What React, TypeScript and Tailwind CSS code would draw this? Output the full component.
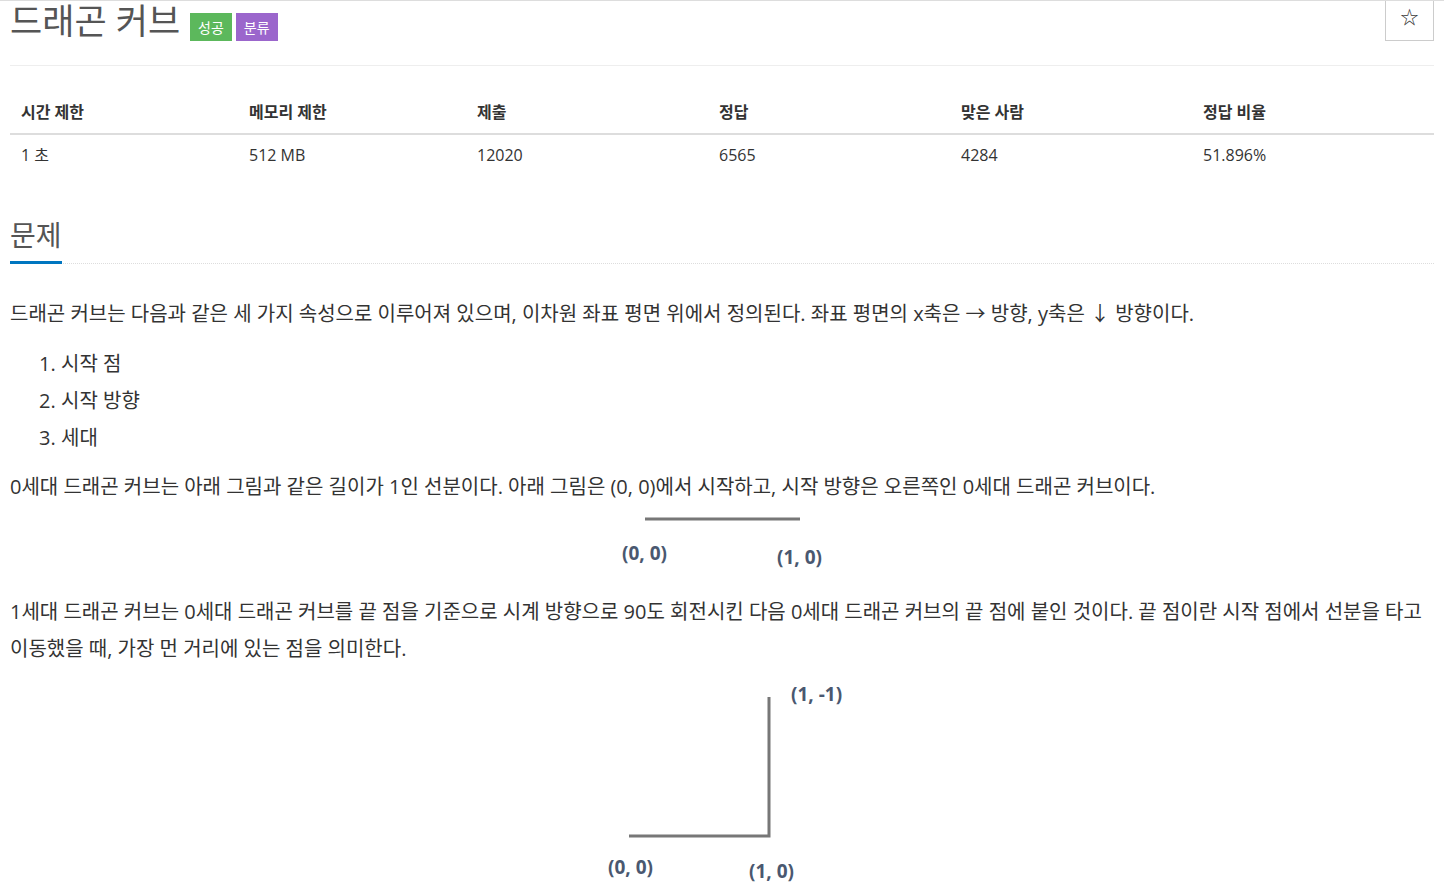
import React from 'react';

const font = { fontFamily: "'Open Sans', 'Noto Sans CJK KR', sans-serif" };

const stats = [
  { label: '시간 제한', value: '1 초', w: 'w-[228px]' },
  { label: '메모리 제한', value: '512 MB', w: 'w-[228px]' },
  { label: '제출', value: '12020', w: 'w-[242px]' },
  { label: '정답', value: '6565', w: 'w-[242px]' },
  { label: '맞은 사람', value: '4284', w: 'w-[242px]' },
  { label: '정답 비율', value: '51.896%', w: 'w-[242px]' },
];

const labelCls = 'fill-[#4a5870] text-[19px] font-bold';

const App: React.FC = () => {
  return (
    <div className="min-h-screen border-t border-[#ddd] bg-white px-[10px] text-[#333]" style={font}>
      <div className="flex items-start justify-between">
        <div className="flex items-start">
          <h1 className="text-[35px] font-normal leading-[40px] text-[#555]">드래곤 커브</h1>
          <span className="ml-[10px] mt-[12px] flex h-[28px] items-center bg-[#5cb85c] px-[8px] text-[14px] text-white">성공</span>
          <span className="ml-[4px] mt-[12px] flex h-[28px] items-center bg-[#9b66cc] px-[8px] text-[14px] text-white">분류</span>
        </div>
        <button className="flex h-[40px] w-[49px] justify-center border border-t-0 border-[#ccc] pt-[4px] text-[18px] leading-[24px] text-[#333]">☆</button>
      </div>
      <div className="mt-[24px] border-t border-[#eee]" />

      <table className="mt-[25px] w-full border-collapse text-[16px]">
        <thead>
          <tr className="border-b-2 border-[#ddd]">
            {stats.map((s) => (
              <th key={s.label} className={`${s.w} px-[11px] py-[11px] text-left font-bold leading-[20px] text-[#333]`}>{s.label}</th>
            ))}
          </tr>
        </thead>
        <tbody>
          <tr>
            {stats.map((s) => (
              <td key={s.label} className="px-[11px] py-[10px] leading-[20px]">{s.value}</td>
            ))}
          </tr>
        </tbody>
      </table>

      <div className="mt-[41px] border-b border-dotted border-[#ddd]">
        <h2 className="mb-[-1px] inline-block border-b-[3px] border-[#0076c0] pb-[7px] text-[28px] font-normal leading-[38px] text-[#555]">문제</h2>
      </div>

      <div className="mt-[31px] text-[20px] leading-[37px]">
        <p>드래곤 커브는 다음과 같은 세 가지 속성으로 이루어져 있으며, 이차원 좌표 평면 위에서 정의된다. 좌표 평면의 x축은 → 방향, y축은 ↓ 방향이다.</p>
        <ol className="mt-[13px] list-decimal pl-[51px]">
          <li>시작 점</li>
          <li>시작 방향</li>
          <li>세대</li>
        </ol>
        <p className="mt-[12px]">0세대 드래곤 커브는 아래 그림과 같은 길이가 1인 선분이다. 아래 그림은 (0, 0)에서 시작하고, 시작 방향은 오른쪽인 0세대 드래곤 커브이다.</p>
        <div className="flex justify-center">
          <svg width="230" height="88" viewBox="0 0 230 88">
            <line x1="38" y1="14" x2="193" y2="14" stroke="#777" strokeWidth="3" />
            <text x="15" y="55" className={labelCls}>(0, 0)</text>
            <text x="170" y="59" className={labelCls}>(1, 0)</text>
          </svg>
        </div>
        <p>1세대 드래곤 커브는 0세대 드래곤 커브를 끝 점을 기준으로 시계 방향으로 90도 회전시킨 다음 0세대 드래곤 커브의 끝 점에 붙인 것이다. 끝 점이란 시작 점에서 선분을 타고 이동했을 때, 가장 먼 거리에 있는 점을 의미한다.</p>
        <div className="mt-[13px] flex justify-center">
          <svg width="250" height="216" viewBox="0 0 250 216">
            <polyline points="172,17 172,156 32,156" fill="none" stroke="#777" strokeWidth="3" />
            <text x="194" y="21" className={labelCls}>(1, -1)</text>
            <text x="11" y="194" className={labelCls}>(0, 0)</text>
            <text x="152" y="198" className={labelCls}>(1, 0)</text>
          </svg>
        </div>
      </div>
    </div>
  );
};

export default App;
